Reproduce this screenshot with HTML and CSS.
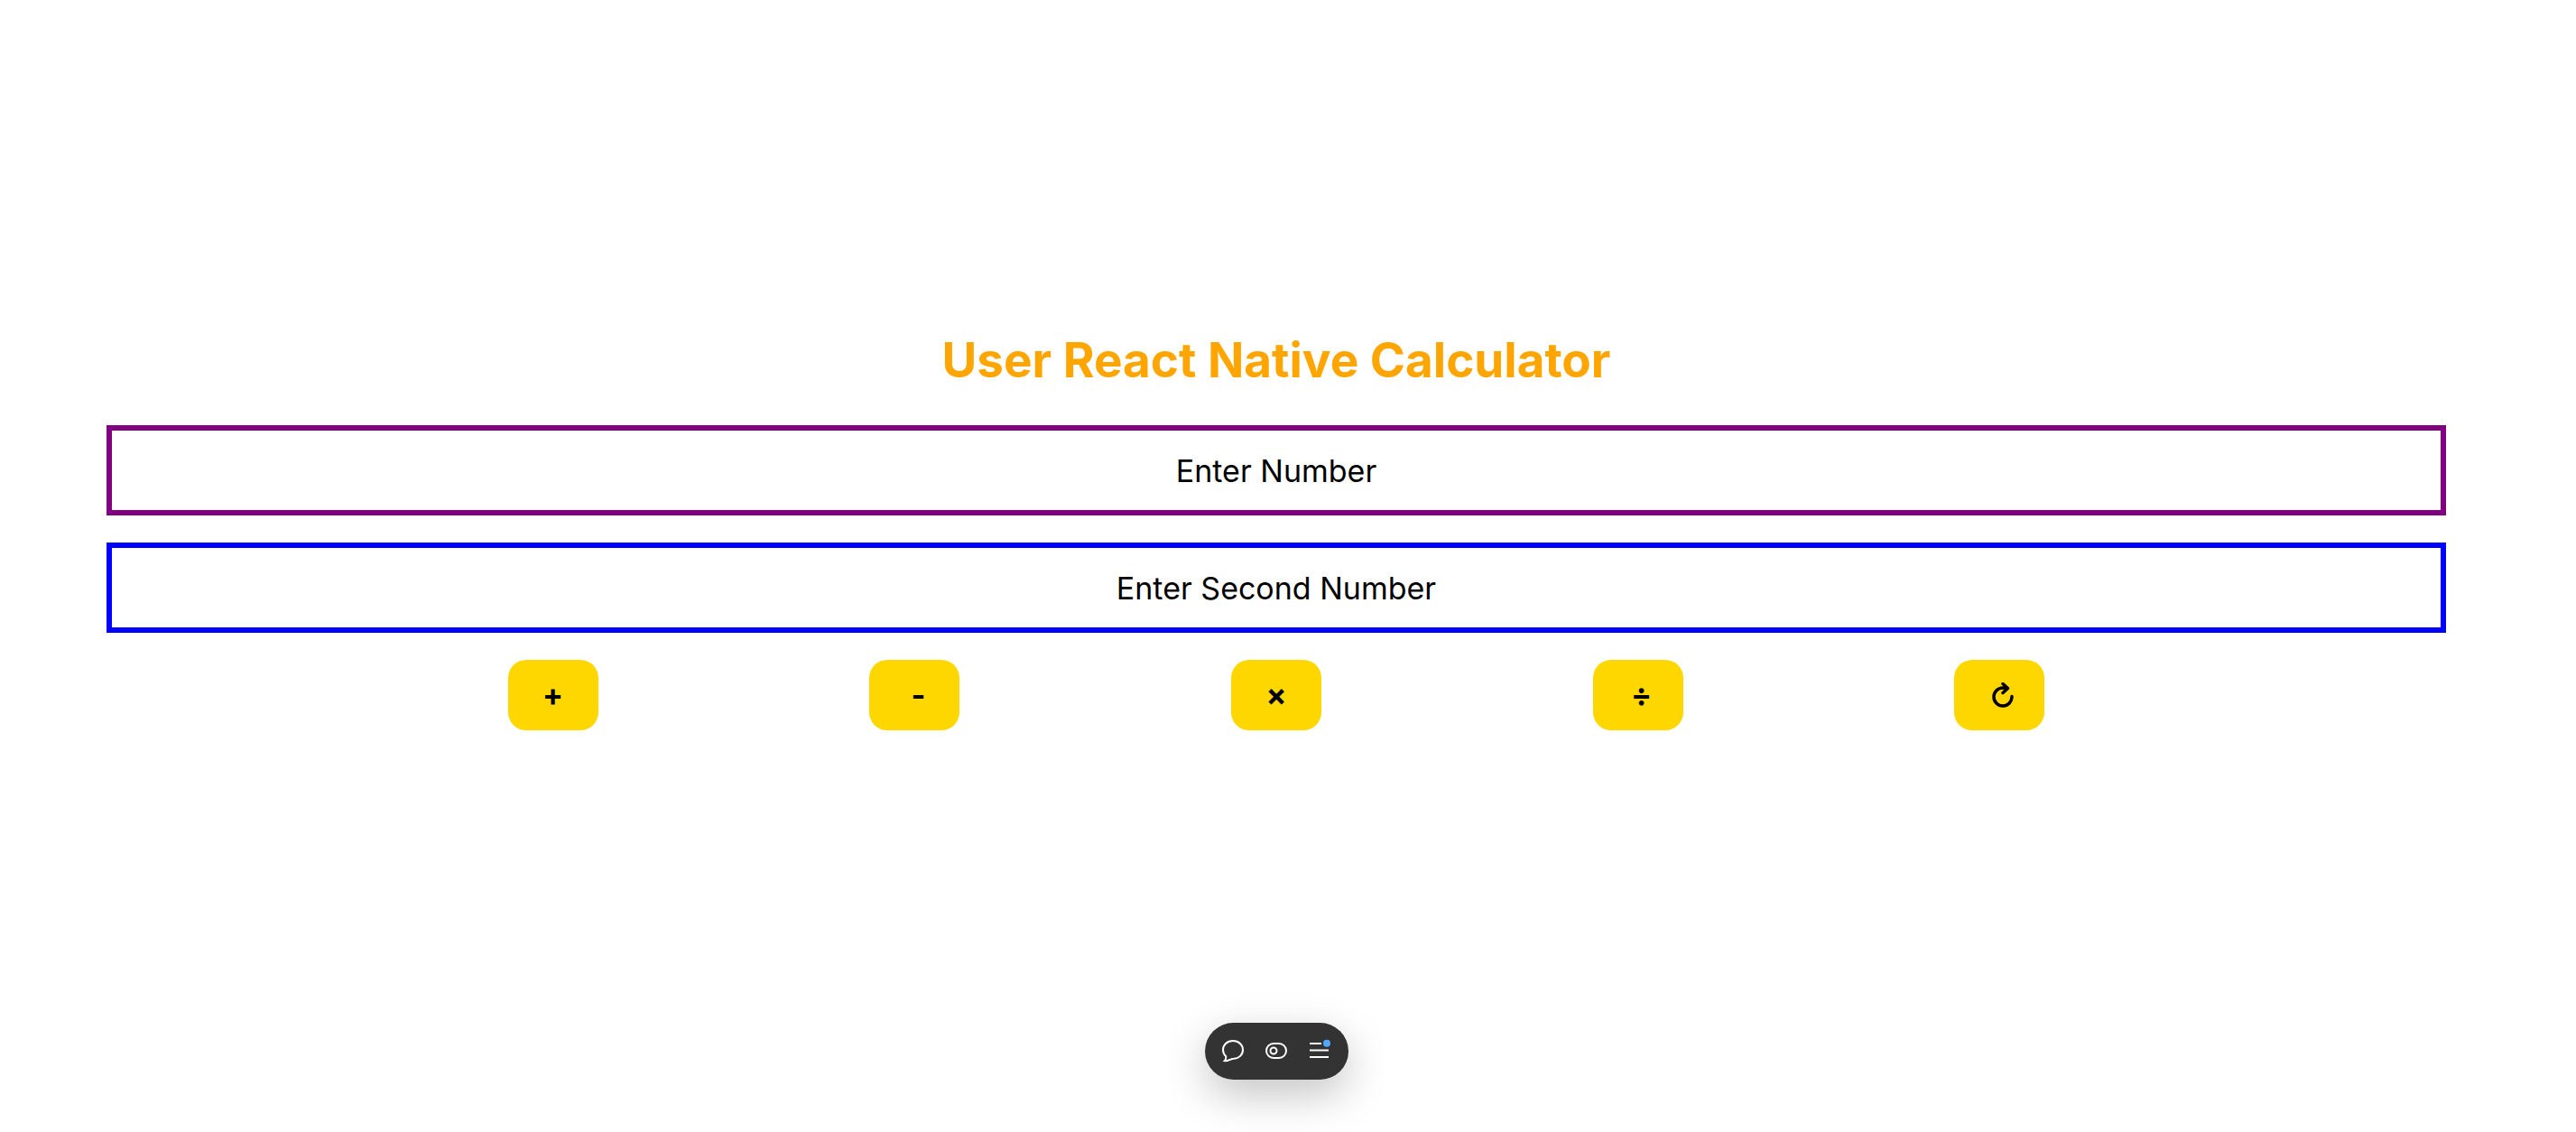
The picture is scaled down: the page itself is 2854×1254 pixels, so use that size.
FILE: index.html
```html
<!DOCTYPE html>
<html lang="en">
<head>
  <meta charset="utf-8">
  <meta name="viewport" content="width=device-width, initial-scale=1">
  <title>User React Native Calculator</title>
  <link rel="stylesheet" href="styles.css">
</head>
<body>
  <main class="calculator">
    <h1 class="title">User React Native Calculator</h1>
    <input class="number number-first" type="text" inputmode="decimal" placeholder="Enter Number" aria-label="Enter Number">
    <input class="number number-second" type="text" inputmode="decimal" placeholder="Enter Second Number" aria-label="Enter Second Number">
    <div class="operators">
      <button class="operator" type="button" aria-label="Add">+</button>
      <button class="operator" type="button" aria-label="Subtract"> -</button>
      <button class="operator" type="button" aria-label="Multiply">×</button>
      <button class="operator" type="button" aria-label="Divide"> ÷</button>
      <button class="operator" type="button" aria-label="Reset"> <svg class="reset-icon" viewBox="0 0 24 30" aria-hidden="true"><path d="M22 15.500A10 10 0 1 1 12 6H17M12 1.500L17.500 6.500L12 11.500"/></svg></button>
    </div>
  </main>
  <div class="toolbar-dock">
    <div class="toolbar" role="toolbar" aria-label="Page tools">
      <button class="tool" type="button" aria-label="Comment">
        <svg class="tool-icon" viewBox="0 0 32 32" aria-hidden="true"><path d="M16 5C22.500 5 27 9.500 27 15S22.500 24.500 17 24.800C14 24.800 12.500 26.500 8.500 27.200L6.800 27.100C8.300 25.500 8.500 24 8.300 22.200C6.300 20.500 5 18 5 15C5 9.500 9.500 5 16 5Z"/></svg>
      </button>
      <button class="tool" type="button" aria-label="Toggle preview">
        <svg class="tool-icon" viewBox="0 0 32 32" aria-hidden="true"><rect x="5" y="8" width="22" height="16" rx="8"/><circle cx="13" cy="16" r="3.500"/></svg>
      </button>
      <button class="tool" type="button" aria-label="Menu">
        <svg class="tool-icon" viewBox="0 0 32 32" aria-hidden="true"><path d="M5 8H18M5 15.500H26M5 23H26"/><circle class="notice" cx="24" cy="7.700" r="4"/></svg>
      </button>
    </div>
  </div>
</body>
</html>
```
FILE: styles.css
```css
* {
  box-sizing: border-box;
}

body {
  margin: 0;
  min-height: 100vh;
  padding-right: 26px;
  background: #fff;
  font-family: Inter, "Liberation Sans", sans-serif;
  color: #000;
}

.calculator {
  display: flex;
  flex-direction: column;
  gap: 30px;
  padding: 365px 118px 0;
}

.title {
  margin: 0 0 8px;
  font-size: 53px;
  line-height: 68px;
  font-weight: 700;
  text-align: center;
  color: orange;
}

.number {
  width: 100%;
  height: 100px;
  padding: 0 20px;
  border: 6px solid;
  border-radius: 0;
  background: transparent;
  font: inherit;
  font-size: 34px;
  text-align: center;
  outline: none;
}

.number::placeholder {
  color: #000;
  opacity: 1;
}

.number-first {
  border-color: purple;
}

.number-second {
  border-color: blue;
}

.operators {
  display: flex;
  justify-content: space-evenly;
  padding: 0 144px;
}

.operator {
  width: 100px;
  height: 78px;
  padding: 0;
  border: 0;
  border-radius: 20px;
  background: gold;
  color: #000;
  font: inherit;
  font-size: 34px;
  font-weight: 700;
  line-height: 38px;
  white-space: pre;
}

.reset-icon {
  width: 24px;
  height: 30px;
  vertical-align: -4px;
  fill: none;
  stroke: currentColor;
  stroke-width: 3.5;
  stroke-linecap: round;
  stroke-linejoin: round;
}

.toolbar-dock {
  position: fixed;
  right: 26px;
  bottom: 58px;
  left: 0;
  display: flex;
  justify-content: center;
}

.toolbar {
  display: flex;
  gap: 16px;
  padding: 15px 16px 16px 15px;
  border-radius: 32px;
  background: #333;
  box-shadow: 0 16px 48px rgba(0, 0, 0, 0.24);
}

.tool {
  width: 32px;
  height: 32px;
  padding: 0;
  border: 0;
  background: none;
  color: #fff;
}

.tool-icon {
  display: block;
  width: 32px;
  height: 32px;
  fill: none;
  stroke: currentColor;
  stroke-width: 2;
}

.notice {
  fill: #52a8ff;
  stroke: none;
}
```
